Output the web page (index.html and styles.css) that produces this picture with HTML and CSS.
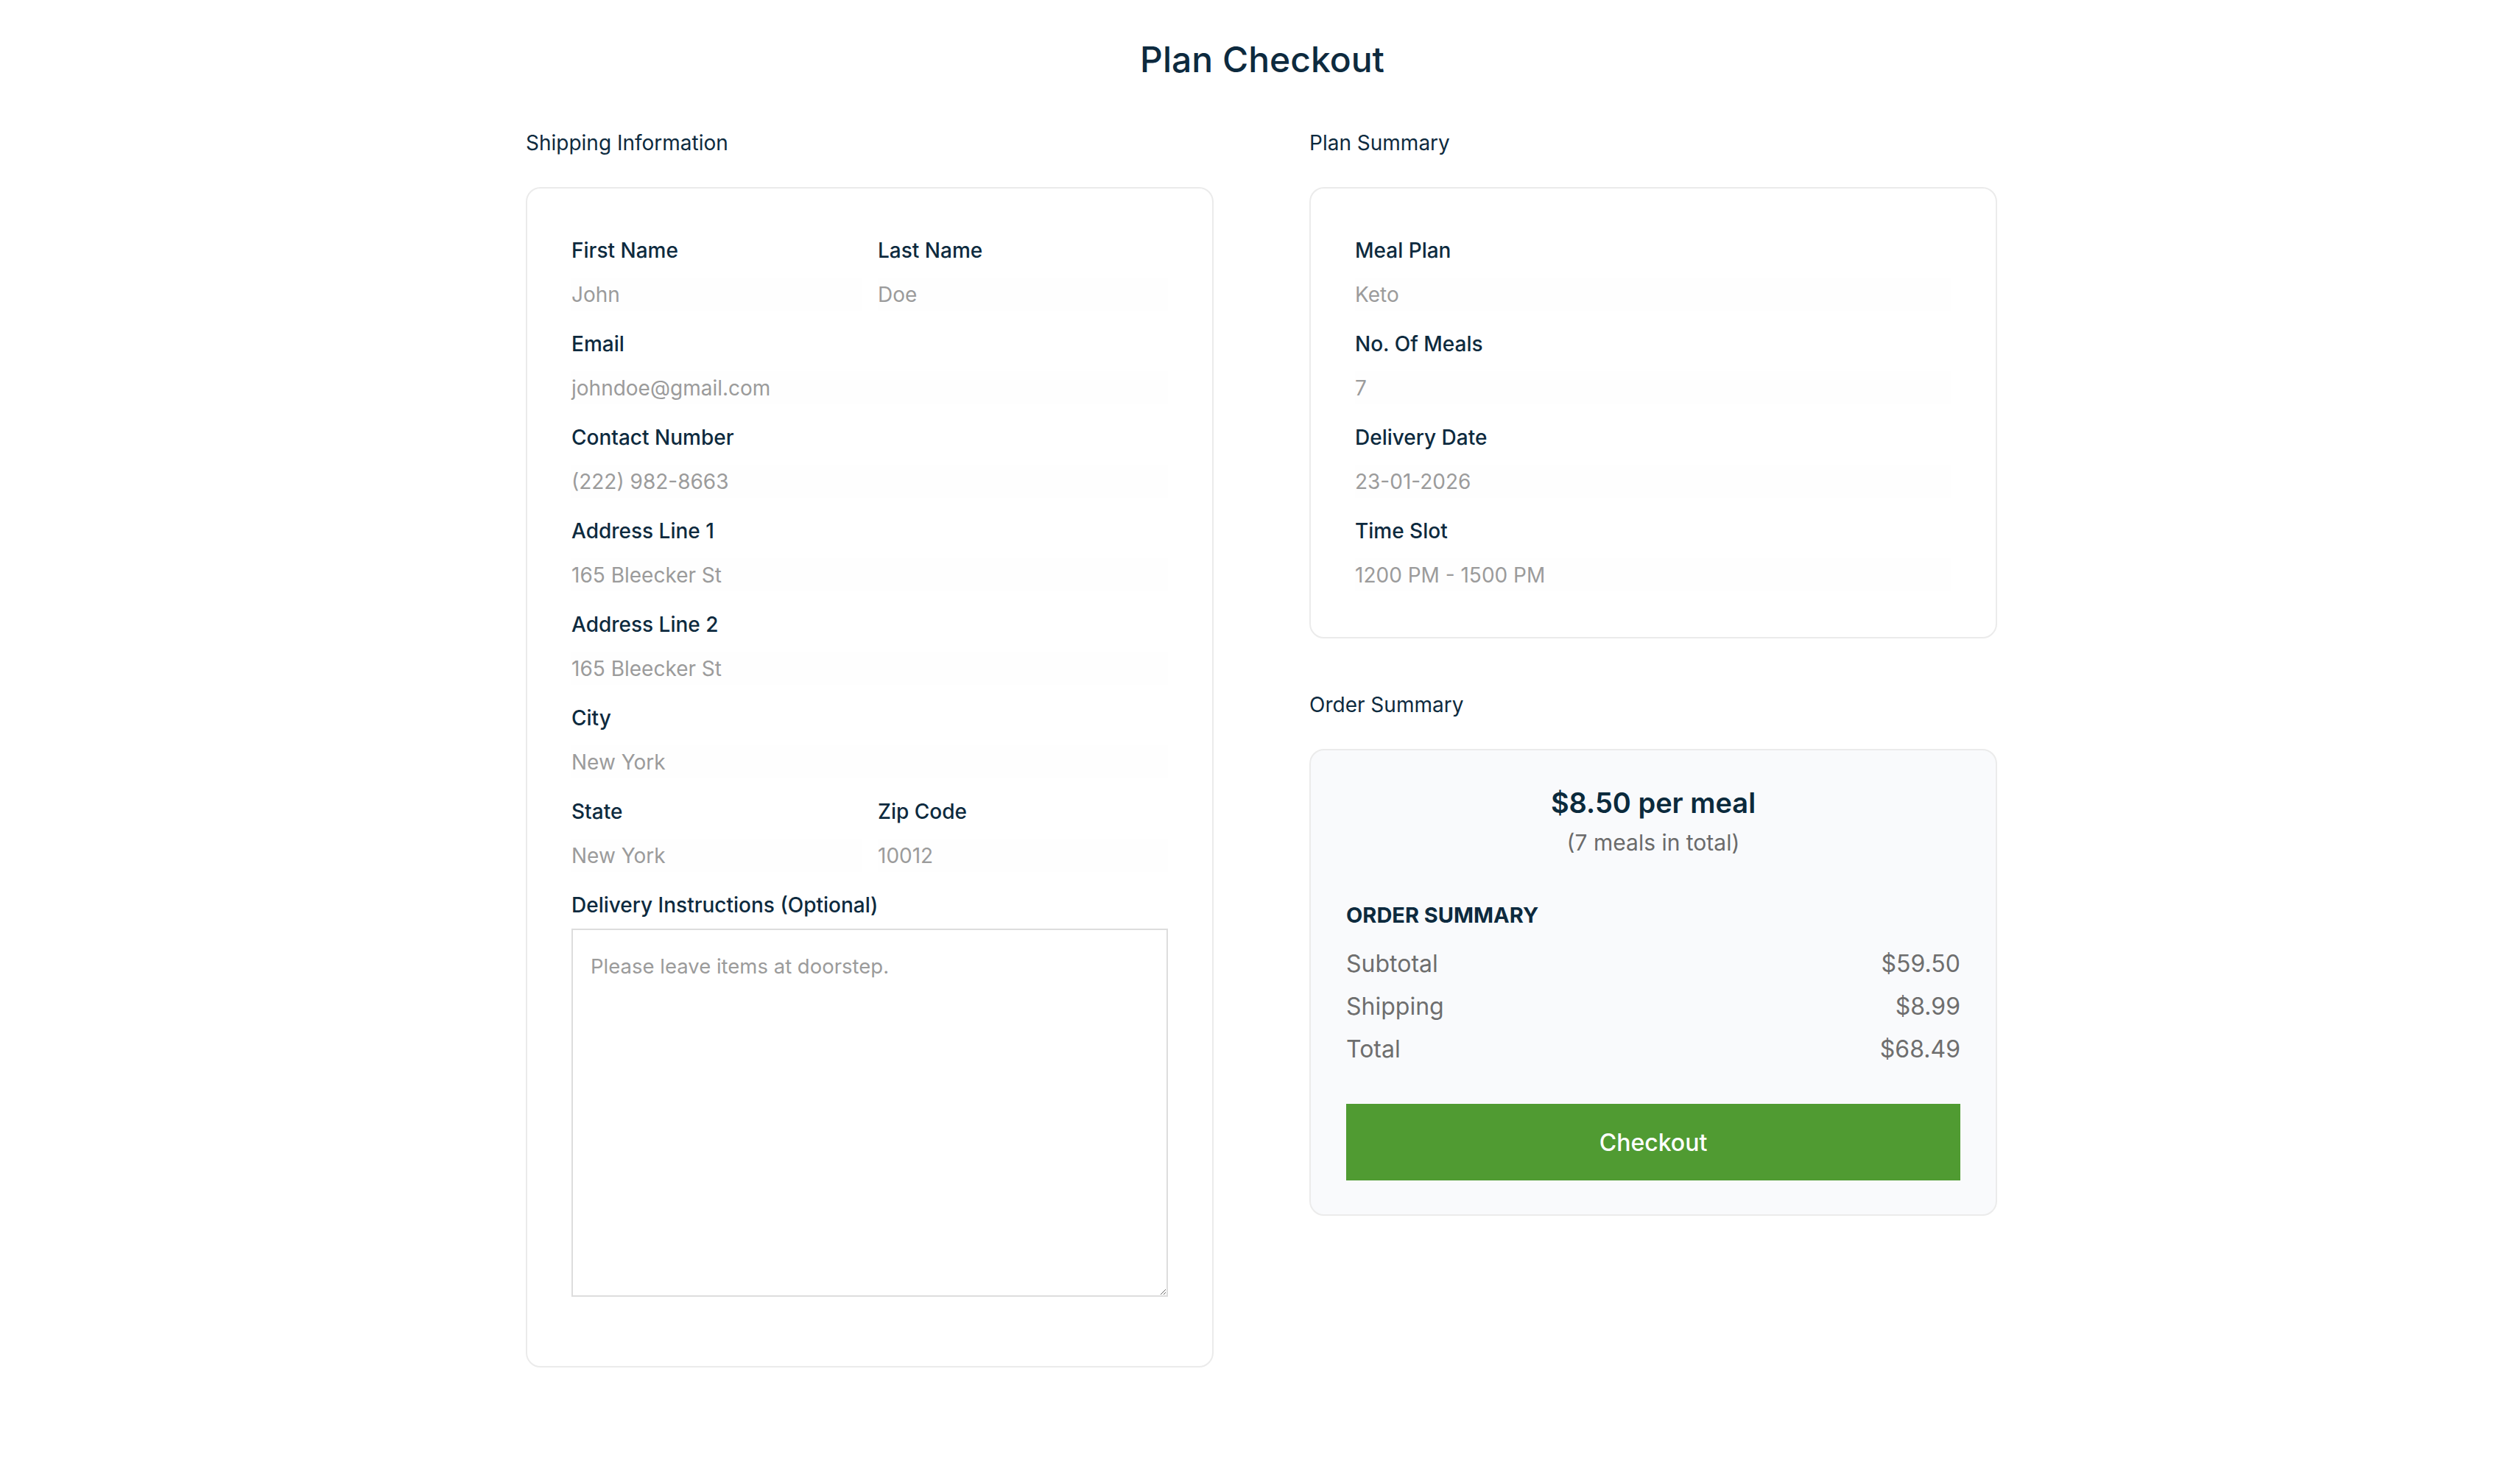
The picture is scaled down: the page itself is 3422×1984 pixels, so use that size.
FILE: index.html
```html
<!DOCTYPE html>
<html lang="en">
<head>
<meta charset="utf-8">
<title>Plan Checkout</title>
<link rel="stylesheet" href="styles.css">
</head>
<body>
<main class="page">
  <h1 class="title">Plan Checkout</h1>
  <div class="columns">
    <section class="column">
      <h2 class="section-title">Shipping Information</h2>
      <div class="card card-shipping">
        <div class="pair">
          <div class="field">
            <label class="label">First Name</label>
            <div class="value">John</div>
          </div>
          <div class="field">
            <label class="label">Last Name</label>
            <div class="value">Doe</div>
          </div>
        </div>
        <div class="field">
          <label class="label">Email</label>
          <div class="value">johndoe@gmail.com</div>
        </div>
        <div class="field">
          <label class="label">Contact Number</label>
          <div class="value">(222) 982-8663</div>
        </div>
        <div class="field">
          <label class="label">Address Line 1</label>
          <div class="value">165 Bleecker St</div>
        </div>
        <div class="field">
          <label class="label">Address Line 2</label>
          <div class="value">165 Bleecker St</div>
        </div>
        <div class="field">
          <label class="label">City</label>
          <div class="value">New York</div>
        </div>
        <div class="pair">
          <div class="field">
            <label class="label">State</label>
            <div class="value">New York</div>
          </div>
          <div class="field">
            <label class="label">Zip Code</label>
            <div class="value">10012</div>
          </div>
        </div>
        <div class="field field-last">
          <label class="label">Delivery Instructions (Optional)</label>
          <textarea class="notes" placeholder="Please leave items at doorstep."></textarea>
        </div>
      </div>
    </section>

    <section class="column">
      <h2 class="section-title">Plan Summary</h2>
      <div class="card card-plan">
        <div class="field">
          <label class="label">Meal Plan</label>
          <div class="value">Keto</div>
        </div>
        <div class="field">
          <label class="label">No. Of Meals</label>
          <div class="value">7</div>
        </div>
        <div class="field">
          <label class="label">Delivery Date</label>
          <div class="value">23-01-2026</div>
        </div>
        <div class="field field-last">
          <label class="label">Time Slot</label>
          <div class="value">1200 PM - 1500 PM</div>
        </div>
      </div>

      <h2 class="section-title section-title-order">Order Summary</h2>
      <div class="card card-order">
        <div class="price">$8.50 per meal</div>
        <div class="price-note">(7 meals in total)</div>
        <div class="order-heading">ORDER SUMMARY</div>
        <div class="rows">
          <div class="row"><span>Subtotal</span><span>$59.50</span></div>
          <div class="row"><span>Shipping</span><span>$8.99</span></div>
          <div class="row"><span>Total</span><span>$68.49</span></div>
        </div>
        <button class="checkout" type="button">Checkout</button>
      </div>
    </section>
  </div>
</main>
</body>
</html>
```

FILE: styles.css
```css
* {
  box-sizing: border-box;
}

html, body {
  margin: 0;
  background: #ffffff;
}

body {
  padding: 0 0 0 6px;
  font-family: Inter, "Liberation Sans", sans-serif;
  color: #0d2a3e;
}

.page {
  width: 2000px;
  margin: 0 auto;
  padding-bottom: 120px;
}

.title {
  margin: 52px 0 0;
  font-size: 48px;
  line-height: 58px;
  font-weight: 500;
  text-align: center;
  color: #0d2a3e;
}

.columns {
  margin-top: 68px;
  display: grid;
  grid-template-columns: 934px 934px;
  column-gap: 130px;
  align-items: start;
}

.column {
  display: flex;
  flex-direction: column;
}

.section-title {
  margin: 0 0 44px;
  font-size: 28px;
  line-height: 32px;
  font-weight: 400;
  color: #0d2a3e;
}

.section-title-order {
  margin-top: 74px;
}

.card {
  border: 2px solid #ebebeb;
  border-radius: 20px;
  background: #ffffff;
}

.card-shipping {
  padding: 67px 60px 94px;
}

.card-plan {
  padding: 67px 60px 62px;
}

.pair {
  display: grid;
  grid-template-columns: 1fr 1fr;
  column-gap: 22px;
}

.field {
  display: flex;
  flex-direction: column;
  margin-bottom: 28px;
}

.field-last {
  margin-bottom: 0;
}

.label {
  display: block;
  font-size: 28px;
  line-height: 34px;
  font-weight: 500;
  color: #0d2a3e;
}

.value {
  margin-top: 20px;
  height: 45px;
  display: flex;
  align-items: center;
  font-size: 28px;
  font-weight: 400;
  color: #9b9b9b;
  background: #fefefe;
}

.notes {
  display: block;
  margin: 15px 0 0;
  width: 100%;
  height: 500px;
  padding: 28px 24px;
  border: 2px solid #dddddd;
  border-radius: 0;
  background: #ffffff;
  font-family: Inter, "Liberation Sans", sans-serif;
  font-size: 27.5px;
  line-height: 42px;
  color: #333333;
  resize: both;
  outline: none;
}

.notes::placeholder {
  color: #9b9b9b;
}

.card-order {
  background: #f9fafc;
  padding: 47px 48px 46px;
  display: flex;
  flex-direction: column;
}

.price {
  font-size: 38px;
  line-height: 48px;
  font-weight: 600;
  text-align: center;
  color: #0b2a3c;
}

.price-note {
  margin-top: 12px;
  font-size: 30px;
  line-height: 36px;
  text-align: center;
  color: #6b6b6b;
}

.order-heading {
  margin-top: 64px;
  font-size: 29px;
  line-height: 34px;
  font-weight: 700;
  color: #0d2a3e;
}

.rows {
  margin-top: 29px;
  display: flex;
  flex-direction: column;
  gap: 18px;
}

.row {
  display: flex;
  justify-content: space-between;
  font-size: 32px;
  line-height: 40px;
  color: #6e6e6e;
}

.checkout {
  margin-top: 54px;
  height: 104px;
  width: 100%;
  border: none;
  border-radius: 0;
  background: #509b32;
  color: #ffffff;
  font-family: Inter, "Liberation Sans", sans-serif;
  font-size: 32px;
  font-weight: 500;
  cursor: pointer;
}
```
